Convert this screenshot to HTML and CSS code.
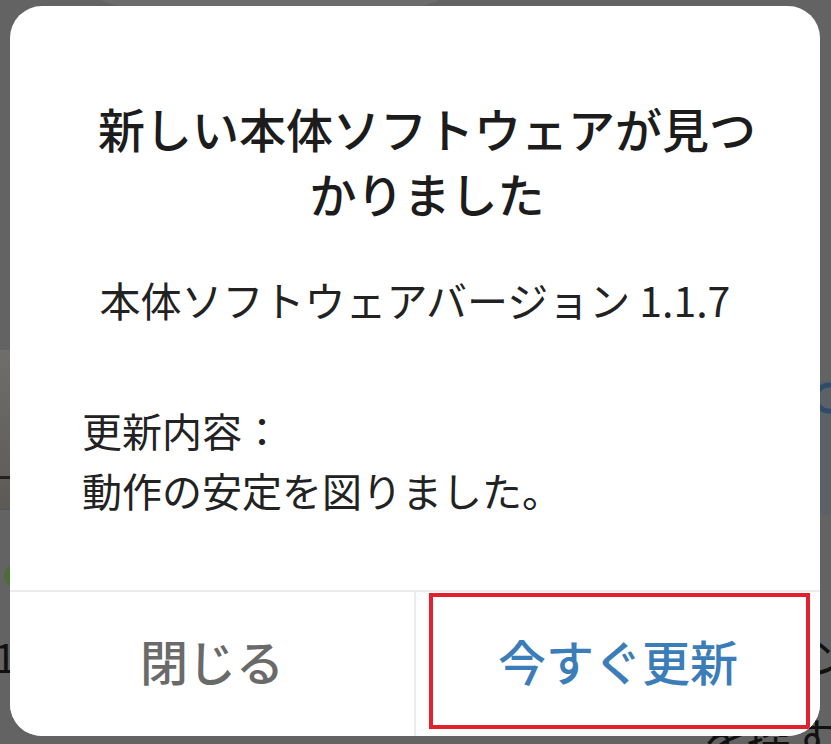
FILE: index.html
```html
<!DOCTYPE html>
<html lang="ja">
<head>
<meta charset="utf-8">
<title>本体ソフトウェア更新</title>
<link rel="stylesheet" href="styles.css">
</head>
<body>
<div class="screen">
  <div class="backdrop">
    <div class="bg-photo-top"></div>
    <div class="bg-photo-left"></div>
    <div class="bg-dot"></div>
    <span class="bg-one">1</span>
    <div class="bg-right-strip"></div>
    <svg class="bg-search" width="24" height="40" viewBox="0 0 24 40"><circle cx="22" cy="18" r="13" fill="none" stroke="#2f4d6b" stroke-width="5"/></svg>
    <span class="bg-n">ン</span>
    <span class="bg-sagasu">を探す</span>
  </div>
  <div class="dialog">
    <div class="content">
      <h1 class="title">新しい本体ソフトウェアが見つかりました</h1>
      <p class="version">本体ソフトウェアバージョン 1.1.7</p>
      <div class="notes">
        <p>更新内容：</p>
        <p>動作の安定を図りました。</p>
      </div>
    </div>
    <div class="actions">
      <button class="btn btn-close">閉じる</button>
      <button class="btn btn-update">今すぐ更新<span class="highlight"></span></button>
    </div>
  </div>
</div>
</body>
</html>
```
FILE: styles.css
```css
* { box-sizing: border-box; }
html, body {
  margin: 0;
  padding: 0;
  width: 831px;
  height: 744px;
  overflow: hidden;
}
body {
  font-family: "Noto Sans CJK JP", "Noto Sans", sans-serif;
  background: #636363;
}
.screen {
  position: relative;
  width: 831px;
  height: 744px;
  padding: 6px 11px 8px 10px;
}
.backdrop {
  position: absolute;
  inset: 0;
  overflow: hidden;
}
.bg-photo-top {
  position: absolute;
  left: 90px;
  top: -40px;
  width: 360px;
  height: 60px;
  border-radius: 50%;
  background: #6c6c6c;
}
.bg-photo-left {
  position: absolute;
  left: 0;
  top: 350px;
  width: 12px;
  height: 160px;
  background: linear-gradient(#6f6e6c, #5d5a56);
  border-bottom: 1px solid #555;
}
.bg-photo-left::after {
  content: "";
  position: absolute;
  left: 0;
  top: 126px;
  width: 12px;
  height: 3px;
  background: #222;
}
.bg-dot {
  position: absolute;
  left: 4px;
  top: 564px;
  width: 24px;
  height: 24px;
  border-radius: 50%;
  background: #4f6b3c;
}
.bg-one {
  position: absolute;
  left: -6px;
  top: 632px;
  font-size: 40px;
  line-height: 48px;
  color: #111;
}
.bg-right-strip {
  position: absolute;
  right: 0;
  top: 380px;
  width: 20px;
  height: 135px;
  background: #5c6167;
}
.bg-search {
  position: absolute;
  right: 0;
  top: 380px;
}
.bg-n {
  position: absolute;
  right: -22px;
  top: 630px;
  font-size: 44px;
  line-height: 50px;
  color: #111;
}
.bg-sagasu {
  position: absolute;
  right: -4px;
  top: 712px;
  font-size: 44px;
  line-height: 50px;
  color: #111;
}
.dialog {
  position: relative;
  width: 810px;
  height: 730px;
  background: #fff;
  border-radius: 32px;
  display: flex;
  flex-direction: column;
  overflow: hidden;
}
.content {
  flex: 1;
  padding: 89px 72px 0 72px;
}
.title {
  margin: 0 auto;
  width: 690px;
  text-align: center;
  font-size: 47px;
  line-height: 65px;
  font-weight: 500;
  color: #1c1c1c;
}
.version {
  margin: 44px 0 0;
  text-align: center;
  font-size: 41px;
  line-height: 60px;
  font-weight: 400;
  color: #222;
}
.notes {
  margin-top: 71px;
}
.notes p {
  margin: 0;
  font-size: 40px;
  line-height: 60px;
  color: #222;
}
.actions {
  display: flex;
  height: 146px;
  border-top: 2px solid #ececec;
}
.btn {
  flex: 1;
  position: relative;
  border: 0;
  background: #fff;
  font-family: inherit;
  font-size: 48px;
  font-weight: 500;
  padding: 0 0 8px;
  margin: 0;
}
.btn-close {
  color: #6a6a6a;
  border-right: 2px solid #ececec;
}
.btn-update {
  color: #3b7db8;
}
.highlight {
  position: absolute;
  top: 1px;
  left: 13px;
  right: 10px;
  bottom: 7px;
  border: 4px solid #e3202e;
  pointer-events: none;
}
```
